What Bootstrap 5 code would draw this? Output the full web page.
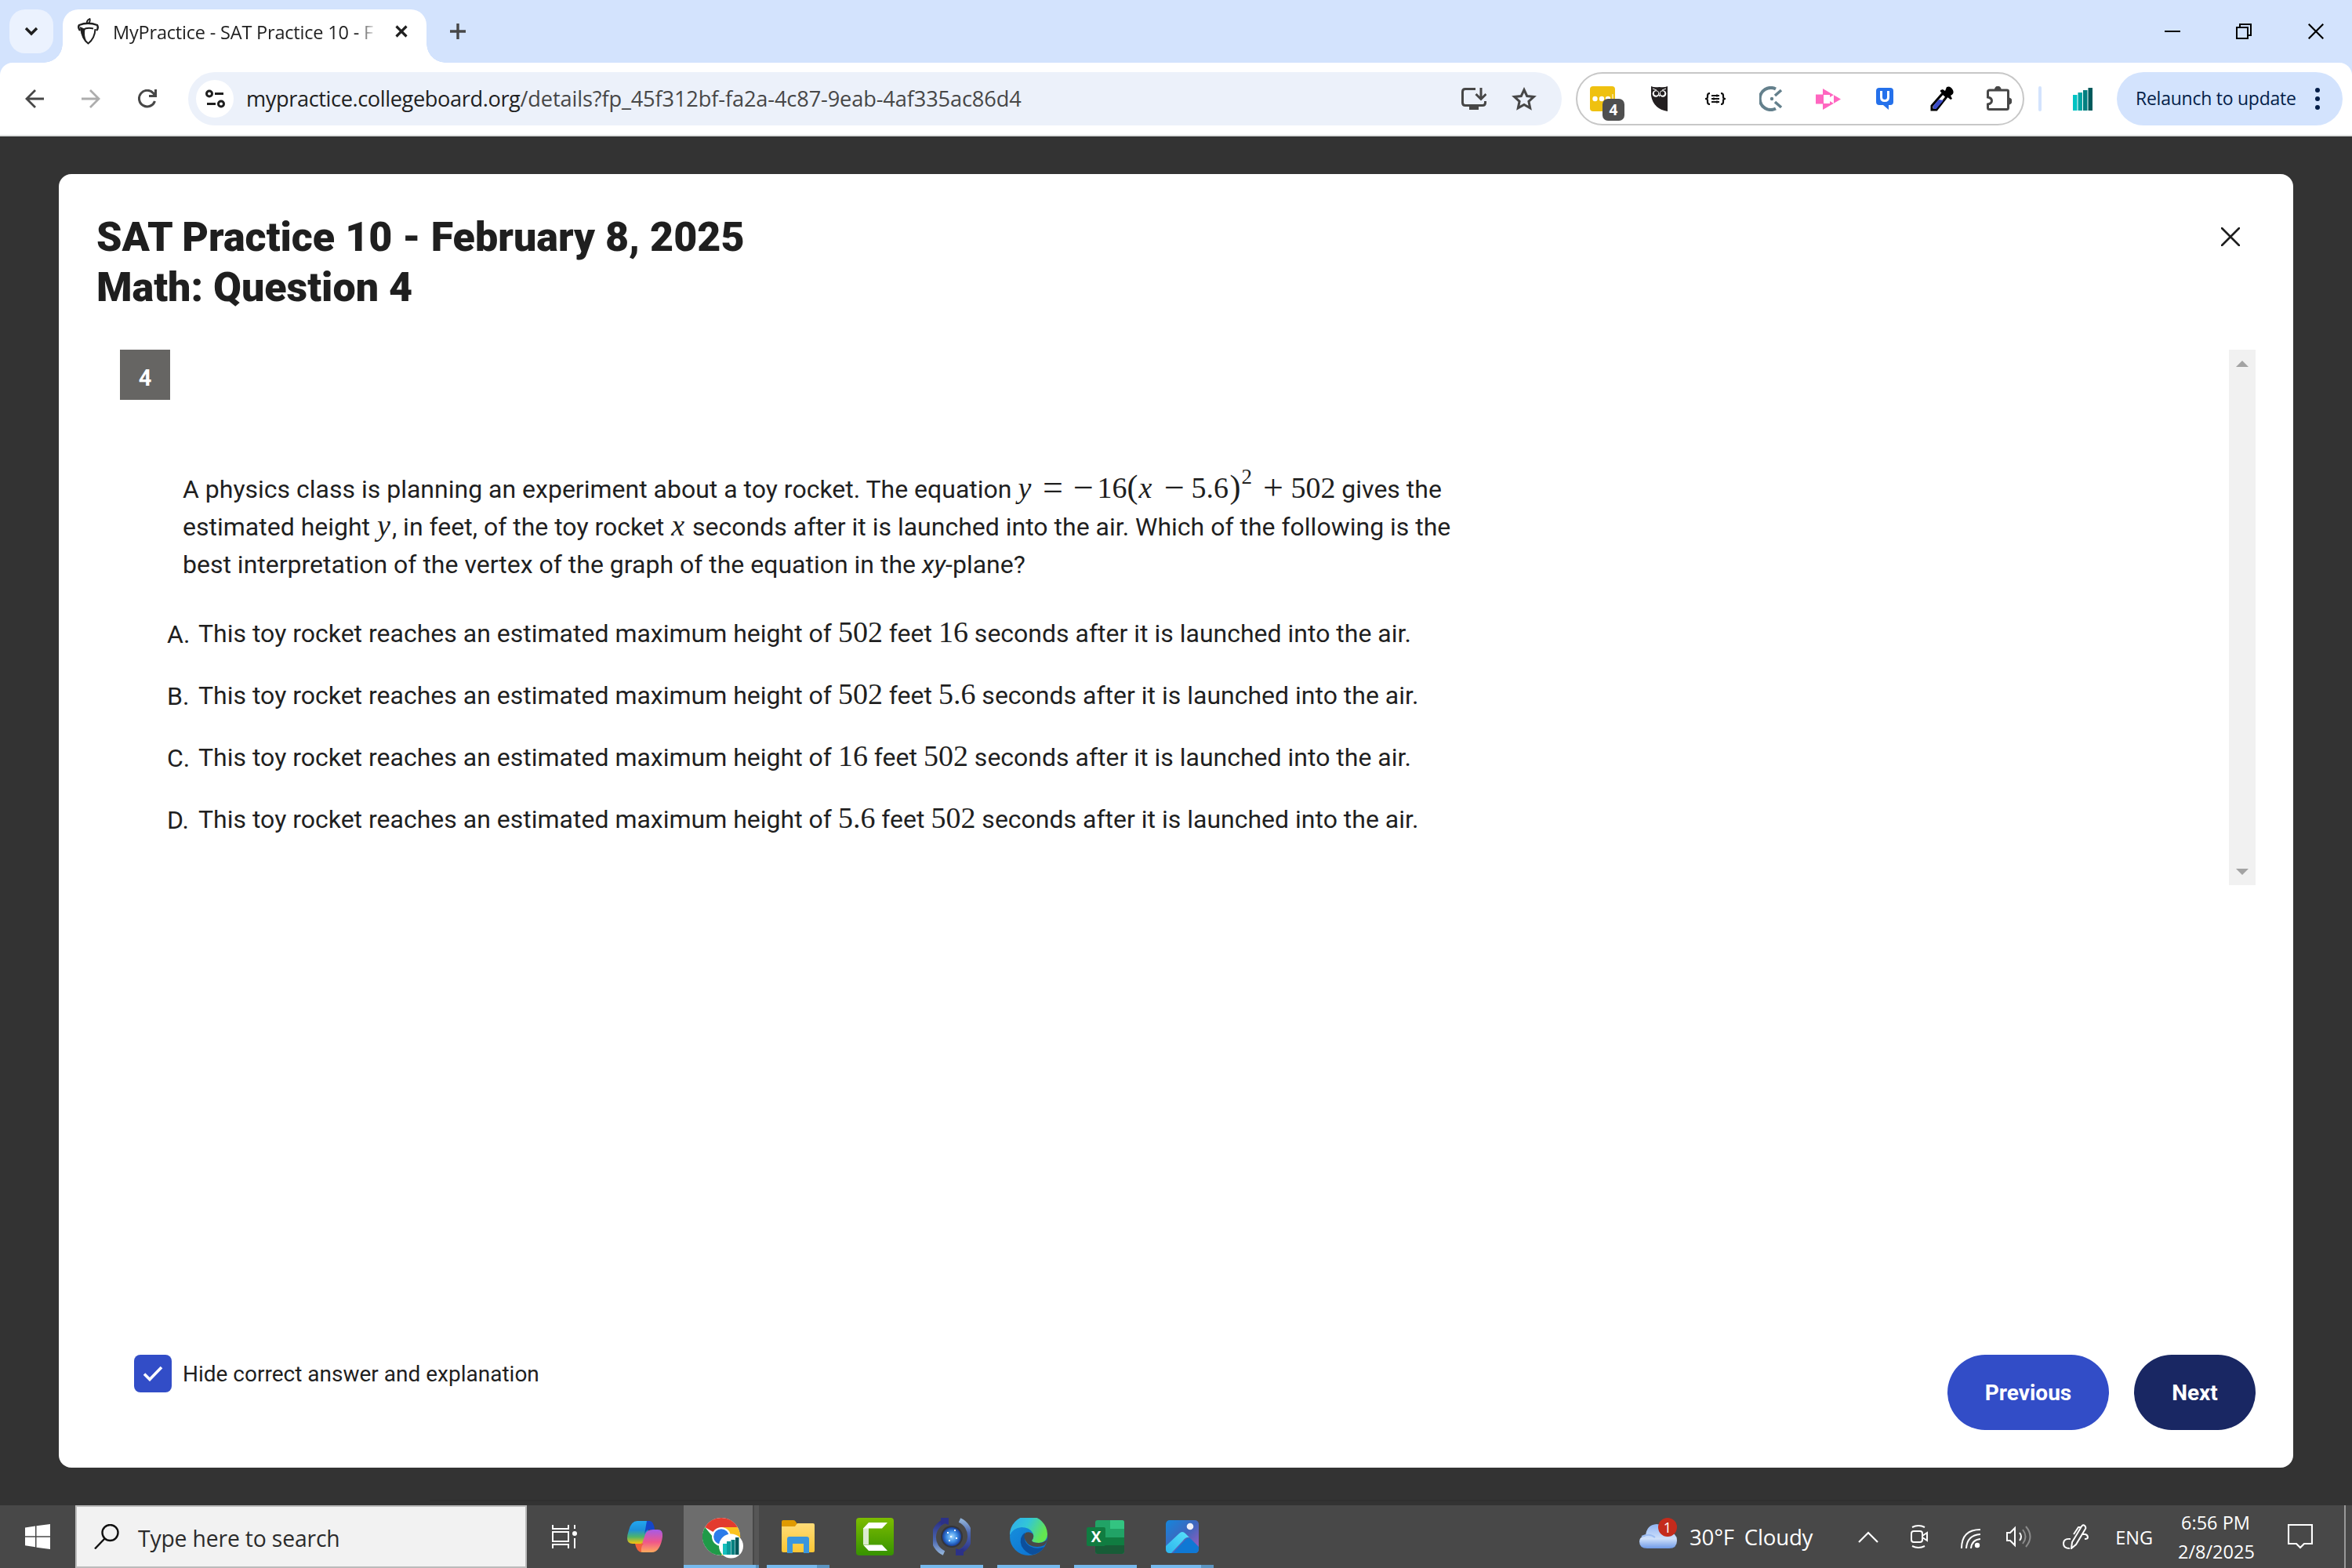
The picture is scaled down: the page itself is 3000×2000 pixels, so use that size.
<!DOCTYPE html>
<html lang="en">
<head>
<meta charset="utf-8">
<title>MyPractice - SAT Practice 10</title>
<link href="https://cdn.jsdelivr.net/npm/bootstrap@5.3.0/dist/css/bootstrap.min.css" rel="stylesheet">
<script src="https://cdn.jsdelivr.net/npm/bootstrap@5.3.0/dist/js/bootstrap.bundle.min.js"></script>
<style>
  body { width: 3000px; height: 2000px; overflow: hidden; background: #333; font-family: "Open Sans", "Noto Sans", sans-serif; color: #1f1f1f; }
  svg { display: block; flex: none; }
  .t { white-space: nowrap; display: block; flex: none; }
  /* tab strip */
  .tabstrip { height: 80px; background: #d3e3fd; padding-left: 12px; }
  .tab-search { width: 56px; height: 56px; border-radius: 20px; background: #ebf2fe; margin-top: 12px; }
  .tab-active { width: 464px; height: 68px; margin: 12px 0 0 12px; background: #fff; border-radius: 20px 20px 0 0; padding: 0 24px 0 19px; }
  .tab-active::before, .tab-active::after { content: ""; position: absolute; bottom: 0; width: 24px; height: 24px; }
  .tab-active::before { left: -24px; background: radial-gradient(circle at 0 0, transparent 23.5px, #fff 24px); }
  .tab-active::after { right: -24px; background: radial-gradient(circle at 100% 0, transparent 23.5px, #fff 24px); }
  .tab-title { width: 340px; margin: -10px 0 0 18px; font-size: 23.5px; line-height: 34px; letter-spacing: -.19px; -webkit-mask-image: linear-gradient(90deg, #000 312px, transparent 336px); mask-image: linear-gradient(90deg, #000 312px, transparent 336px); }
  .lift { margin-bottom: 12px; }
  /* toolbar */
  .toolbar-wrap { background: #d3e3fd; }
  .toolbar { height: 94px; background: #fff; border-bottom: 2px solid #dfe1e0; border-radius: 16px 16px 0 0; padding: 0 12px 0 32px; }
  .omnibox { width: 1752px; height: 68px; border-radius: 34px; background: #ecf1fa; margin-left: 40px; padding: 0 32px 0 10px; }
  .site-info { width: 48px; height: 48px; }
  .url { font-size: 27.2px; line-height: 40px; margin: 0 0 0 16px; color: #474747; letter-spacing: -.13px; }
  .url b { font-weight: 400; color: #1f1f1f; letter-spacing: -.4px; }
  .ext-pill { width: 572px; height: 68px; border: 2px solid #c7c7c7; border-radius: 34px; margin-left: 18px; padding: 0 14px 0 16px; }
  .ext-badge { right: -12px; bottom: -12px; width: 28px; height: 28px; border-radius: 7px; background: #4f4f4f; color: #fff; font: 700 19px/28px "Open Sans", sans-serif; text-align: center; }
  .tb-divider { width: 4px; height: 32px; border-radius: 2px; background: #d3e3fd; margin: 0 40px 0 18px; }
  .relaunch { width: 288px; height: 68px; border-radius: 34px; background: #d3e3fd; color: #041e49; margin-left: 31px; padding: 0 29px 0 24px; font-size: 23px; line-height: 34px; letter-spacing: -.25px; }
  /* page */
  .stage { height: 1746px; padding: 48px 75px; }
  .dialog-card { width: 2850px; height: 1650px; background: #fff; border-radius: 16px; padding: 48px; font-family: Roboto, sans-serif; }
  .dialog-title { font: 900 52px/64px Roboto, sans-serif; margin: 1px 0 -1px; }
  .closer { margin: 20px 20px 0 0; }
  .q-area { height: 683px; margin-top: 48px; }
  .q-badge { width: 64px; height: 64px; background: #666563; color: #fff; font: 700 29px/72px Roboto, sans-serif; margin-left: 30px; text-align: center; }
  .q-text { margin: 90px 0 0 110px; font-size: 32px; line-height: 48px; }
  .q-opts { margin: 40px 0 0 90px; font-size: 32px; line-height: 48px; gap: 31px; }
  .q-opts .ltr { width: 40px; padding-top: 1px; margin-bottom: -1px; }
  .m { font-family: "Liberation Serif", "Times New Roman", serif; font-size: 38px; line-height: 1px; display: inline-block; white-space: nowrap; }
  .mi { font-style: italic; margin: 0 2px 0 1px; }
  .eq span, .eq i { display: inline-block; line-height: 1px; }
  .eq .op { font-size: 46px; text-align: center; position: relative; top: 2px; }
  .eq .par { font-size: 42px; width: 15px; }
  .eq sup { font-size: 27px; top: -18px; display: inline-block; width: 19px; line-height: 1px; }
  .scroll-track { width: 34px; height: 683px; background: #f1f1f1; padding: 14px 0 13px; }
  .hide-box { width: 48px; height: 48px; border-radius: 8px; background: #324dc7; margin-left: 48px; }
  .hide-label { font-size: 28px; line-height: 50px; margin-left: 14px; }
  .pill-btn { height: 96px; border-radius: 48px; border: 0; color: #fff; font: 700 28px/98px Roboto, sans-serif; padding: 0; }
  .pill-prev { width: 206px; background: #324dc7; }
  .pill-next { width: 155px; background: #192763; margin-left: 32px; }
  .seam { position: absolute; left: 548px; top: 1913px; width: 1904px; height: 2px; background: #2f2f2f; }
  /* taskbar */
  .taskbar { height: 80px; background: #484848; color: #fff; padding-left: 32px; }
  .search-box { width: 576px; height: 80px; border: 2px solid #bbb; background: #f2f2f2; color: #2b2b2b; margin-left: 32px; padding-left: 22px; font-size: 28.3px; line-height: 42px; letter-spacing: -.15px; }
  .search-box .t { margin: 3px 0 0 24px; }
  .app { height: 80px; width: 80px; border-bottom: 4px solid #76b9ed; display: flex; align-items: center; justify-content: center; flex: none; margin-right: 18px; padding-top: 4px; }
  .app-idle { border-color: transparent; }
  .app-stack { border-image: linear-gradient(90deg, #76b9ed 62px, #5a93c0 62px) 4; border-bottom-width: 4px; border-top: 0; border-left: 0; border-right: 0; }
  .app-on { width: 96px; background: linear-gradient(90deg, #6d6d6d 88px, #484848 88px, #484848 90px, #565656 90px); margin: 0 10px 0 26px; border-image: linear-gradient(90deg, #76b9ed 88px, #5a93c0 88px) 4; border-width: 0 0 4px 0; border-style: solid; justify-content: flex-start; padding-left: 24px; }
  .wx-icon { margin-left: 525px; }
  .wx-count { width: 24px; height: 24px; right: 0; top: -8px; background: #c42b1c; font-size: 18px; line-height: 24px; }
  .wx { font-size: 27.6px; line-height: 40px; letter-spacing: -.2px; }
  .tray { font-size: 23.5px; line-height: 37px; padding-top: 2px; }
  .edge-line { width: 2px; height: 80px; background: #999; margin: 0 8px 0 40px; }
</style>
</head>
<body class="m-0">
<svg width="0" height="0" class="position-absolute"><defs>
  <linearGradient id="gCam" x1="0" y1="0" x2="0" y2="1"><stop offset="0" stop-color="#7cbc00"/><stop offset="1" stop-color="#369200"/></linearGradient>
  <linearGradient id="gCp1" x1="0" y1="0" x2="0" y2="1"><stop offset="0" stop-color="#22a7f0"/><stop offset=".4" stop-color="#1e90d8"/><stop offset=".7" stop-color="#4fb46a"/><stop offset="1" stop-color="#fbc40b"/></linearGradient>
  <linearGradient id="gCp2" x1="0" y1="0" x2="0" y2="1"><stop offset="0" stop-color="#a55be8"/><stop offset=".55" stop-color="#f0568a"/><stop offset="1" stop-color="#ffab5c"/></linearGradient>
  <linearGradient id="gEd1" x1="0" y1="0" x2="1" y2=".4"><stop offset="0" stop-color="#2fa8f0"/><stop offset=".5" stop-color="#32c6d8"/><stop offset="1" stop-color="#63e650"/></linearGradient>
  <linearGradient id="gEd2" x1="0" y1="0" x2="1" y2="1"><stop offset="0" stop-color="#1793dd"/><stop offset="1" stop-color="#0b6cd0"/></linearGradient>
  <linearGradient id="gPh" x1="0" y1="0" x2="1" y2="1"><stop offset="0" stop-color="#1586dc"/><stop offset=".5" stop-color="#3f66bd"/><stop offset="1" stop-color="#a85cc0"/></linearGradient>
  <linearGradient id="gPh2" x1="1" y1="0" x2="0" y2="1"><stop offset="0" stop-color="#58e2fa"/><stop offset="1" stop-color="#2bb5ee"/></linearGradient>
  <linearGradient id="gFo" x1="0" y1="0" x2="0" y2="1"><stop offset="0" stop-color="#ffdc78"/><stop offset="1" stop-color="#fbc634"/></linearGradient>
  <radialGradient id="gOrb"><stop offset="0" stop-color="#a8dcff"/><stop offset=".55" stop-color="#3f8fe6"/><stop offset="1" stop-color="#173f9c"/></radialGradient>
  <linearGradient id="gArc1" x1="0" y1="0" x2="0" y2="1"><stop offset="0" stop-color="#2a2f86"/><stop offset=".6" stop-color="#4a66b0"/><stop offset="1" stop-color="#8fb0d8"/></linearGradient>
  <linearGradient id="gArc2" x1="0" y1="1" x2="0" y2="0"><stop offset="0" stop-color="#2a2f86"/><stop offset=".6" stop-color="#4a66b0"/><stop offset="1" stop-color="#8fb0d8"/></linearGradient>
  <linearGradient id="gCl" x1="0" y1="0" x2="0" y2="1"><stop offset="0" stop-color="#8fb4f3"/><stop offset=".6" stop-color="#cfe0fa"/><stop offset="1" stop-color="#6f9ae6"/></linearGradient>
</defs></svg>

<header>
  <div class="tabstrip d-flex align-items-start">
    <div class="tab-search d-flex align-items-center justify-content-center"><svg width="18" height="12" viewBox="0 0 18 12"><path d="M2 2l7 7 7-7" fill="none" stroke="#1f1f1f" stroke-width="3.4"/></svg></div>
    <div class="tab-active d-flex align-items-center position-relative">
      <svg class="lift" width="27" height="34" viewBox="0 0 27 34"><g fill="none" stroke="#1f1f1f"><path d="M12 7Q11 3 15.500 1Q16.500 4 14 7" stroke-width="1.800"/><path d="M3 16Q0 12 2 9Q13 4.500 25 9Q27 13 24 16" stroke-width="2.400"/><path d="M5 14Q5 26 13.500 32.500Q22 26 22.500 14" stroke-width="2"/><path d="M7 15Q12 11.500 20 13.500" stroke-width="2"/></g><path d="M3 11L9.500 14Q8 22 11 29Q3 22 3 11Z" fill="#1f1f1f"/></svg>
      <div class="t tab-title">MyPractice - SAT Practice 10 - F</div>
      <svg class="ms-auto lift" width="16" height="16" viewBox="0 0 16 16"><path d="M1.500 1.500l13 13M14.500 1.500l-13 13" stroke="#1f1f1f" stroke-width="3.200"/></svg>
    </div>
    <svg width="20" height="20" viewBox="0 0 20 20" style="margin:30px 0 0 30px"><path d="M10 0v20M0 10h20" stroke="#474747" stroke-width="3.400"/></svg>
    <svg width="20" height="20" viewBox="0 0 20 20" style="margin:30px 0 0 auto"><path d="M0 10h20" stroke="#000" stroke-width="2"/></svg>
    <svg width="20" height="20" viewBox="0 0 20 20" style="margin:30px 0 0 71px"><path d="M1 5h14v14H1zM5 5V1h14v14h-4" fill="none" stroke="#000" stroke-width="2"/></svg>
    <svg width="20" height="20" viewBox="0 0 20 20" style="margin:30px 36px 0 72px"><path d="M.7.7l18.600 18.600M19.300.7L.7 19.300" stroke="#000" stroke-width="2.200"/></svg>
  </div>
  <div class="toolbar-wrap">
    <div class="toolbar d-flex align-items-center">
      <svg width="24" height="24" viewBox="0 0 24 24"><path d="M24 12H2M13 1L2 12l11 11" fill="none" stroke="#474747" stroke-width="2.800"/></svg>
      <svg class="ms-5" width="24" height="24" viewBox="0 0 24 24"><path d="M0 12h22M11 1l11 11-11 11" fill="none" stroke="#adadad" stroke-width="2.800"/></svg>
      <svg class="ms-5" width="24" height="24" viewBox="0 0 24 24"><path d="M21.500 15A10.300 10.300 0 1 1 19.500 4.800L22 8" fill="none" stroke="#474747" stroke-width="3"/><path d="M22.500 0v8.500H14" fill="none" stroke="#474747" stroke-width="3"/></svg>
      <div class="omnibox d-flex align-items-center">
        <div class="site-info bg-white rounded-circle d-flex align-items-center justify-content-center flex-shrink-0"><svg width="25" height="24" viewBox="0 0 25 24"><g fill="none" stroke="#1f1f1f" stroke-width="3"><circle cx="5" cy="5.500" r="3.500"/><path d="M12 5.500h11M2 18.500h11"/><circle cx="20" cy="18.500" r="3.500"/></g></svg></div>
        <div class="t url"><b>mypractice.collegeboard.org</b>/details?fp_45f312bf-fa2a-4c87-9eab-4af335ac86d4</div>
        <svg class="ms-auto" width="32" height="28" viewBox="0 0 32 28"><path d="M18 1.500H5q-3.500 0-3.500 3.500v14q0 3.500 3.500 3.500h22q3.500 0 3.500-3.500v-2M25 0v13M18.500 8l6.500 6.500L31.500 8" fill="none" stroke="#474747" stroke-width="3"/><path d="M10 23h12v5H10z" fill="#474747"/></svg>
        <svg width="32" height="30" viewBox="0 0 32 30" style="margin-left:32px"><path d="M16 3.500l3.700 8 8.700.9-6.500 5.900 1.800 8.600L16 22.500l-7.700 4.400 1.800-8.600-6.500-5.900 8.700-.9z" fill="none" stroke="#474747" stroke-width="3"/></svg>
      </div>
      <div class="ext-pill d-flex align-items-center">
        <div class="position-relative"><svg width="32" height="32" viewBox="0 0 32 32"><rect width="32" height="32" rx="4" fill="#efc110"/><circle cx="6.500" cy="16" r="3.200" fill="#fff"/><circle cx="15" cy="16" r="3.200" fill="#fff"/><circle cx="23" cy="16" r="3.200" fill="#fff"/><path d="M29 10v10" stroke="#fff"/></svg><span class="ext-badge position-absolute">4</span></div>
        <svg width="21" height="32" viewBox="0 0 21 32" style="margin-left:46px"><path d="M0 0q4 2 10.500 1Q17 2 21 0v32Q3 29 0 12z" fill="#231f20"/><circle cx="6" cy="9.500" r="4.300" fill="#fff"/><circle cx="15" cy="9.500" r="4.300" fill="#fff"/><circle cx="6.500" cy="9" r="2.700" fill="#231f20"/><circle cx="14.500" cy="9" r="2.700" fill="#231f20"/><path d="M2 3l5 2M19 3l-5 2" stroke="#fff"/><path d="M9.500 11h2l-1 3z" fill="#fff"/></svg>
        <svg class="ms-5" width="26" height="16" viewBox="0 0 26 16"><path d="M6 1Q3 1 3 4v2Q3 8 0 8q3 0 3 2v2q0 3 3 3M20 1q3 0 3 3v2q0 2 3 2-3 0-3 2v2q0 3-3 3" fill="none" stroke="#111" stroke-width="2.200"/><path d="M8 4h10M8 8h10M8 12h10" stroke="#111" stroke-width="1.800"/><path d="M15 2.500v3M11 6.500v3M15 10.500v3" stroke="#111" stroke-width="1.800"/></svg>
        <svg width="30" height="32" viewBox="0 0 30 32" style="margin-left:43px"><path d="M21 3.500A14 14 0 1 0 21 28.500" fill="none" stroke="#64808c" stroke-width="4"/><circle cx="16" cy="16" r="2.200" fill="#64808c"/><path d="M20 12l8-7M20 20l8 7" stroke="#64808c" stroke-width="3.600"/></svg>
        <svg width="32" height="31" viewBox="0 -2 32 31" style="margin-left:42px"><rect y="7.500" width="13" height="12" fill="#ff66c0"/><path d="M9 0l23 13.500L9 27z" fill="#ff66c0"/><path d="M10 8h8v3l5-3v11l-5-3v3h-8z" fill="#fff"/></svg>
        <svg width="22" height="28" viewBox="0 0 22 28" style="margin-left:45px"><path d="M4 0h14q4 0 4 4v14q0 4-4 4h-2v6l-7-6H4q-4 0-4-4V4q0-4 4-4z" fill="#2571eb"/><path d="M6.500 4v8q0 4.500 4.500 4.500t4.500-4.500V4" fill="none" stroke="#fff" stroke-width="3"/></svg>
        <svg width="30" height="32" viewBox="0 0 30 32" style="margin-left:47px"><path d="M2 25L16 9l5 4.500L8 30H2z" fill="#fff" stroke="#000" stroke-width="3"/><path d="M4 25l7-8 6 1-9.500 11H4z" fill="#3b4cc8"/><path d="M13 5l3-1 3 2 2-5q5-2 8 4 2 5-3 7l2 4-2 1L13 7z" fill="#000"/></svg>
        <svg width="32" height="32" viewBox="0 1 32 32" style="margin-left:42px"><path d="M4 6h22q1.500 0 1.500 1.500v21q0 2-2 2H3.500q-2 0-2-2V24q5-1 5-4.500T1.500 15V8q0-2 2.500-2z" fill="none" stroke="#474747" stroke-width="3"/><path d="M10 5a4.300 4.300 0 0 1 8.600 0zM28 15.500a4.300 4.300 0 0 1 0 9z" fill="#474747"/></svg>
      </div>
      <div class="tb-divider flex-shrink-0"></div>
      <svg width="25" height="29" viewBox="0 0 25 29"><path d="M0 9h5.500v20H0z" fill="#00c4c4"/><path d="M6.500 6H12v23H6.500z" fill="#00a3a3"/><path d="M13 3h5.500v26H13z" fill="#007f80"/><path d="M19.500 0H25v29h-5.500z" fill="#005a5c"/></svg>
      <div class="relaunch d-flex align-items-center justify-content-between"><span class="t" style="margin-top:-2px">Relaunch to update</span><svg width="6" height="28" viewBox="0 0 6 28"><g fill="#041e49"><circle cx="3" cy="3" r="3"/><circle cx="3" cy="14" r="3"/><circle cx="3" cy="25" r="3"/></g></svg></div>
    </div>
  </div>
</header>

<main class="stage">
  <div class="dialog-card d-flex flex-column">
    <div class="d-flex justify-content-between align-items-start">
      <h1 class="dialog-title">SAT Practice 10 - February 8, 2025<br>Math: Question 4</h1>
      <svg class="closer" width="24" height="24" viewBox="0 0 24 24"><path d="M1 1l22 22M23 1L1 23" stroke="#1e1e1e" stroke-width="2.600" stroke-linecap="round"/></svg>
    </div>
    <div class="q-area d-flex justify-content-between">
      <div>
        <div class="q-badge">4</div>
        <div class="q-text">
          <div class="t">A physics class is planning an experiment about a toy rocket. The equation <span class="m eq"><i style="width:27px">y</i><span class="op" style="width:35px">=</span><span class="op" style="width:39px;padding-left:4px">&minus;</span><span style="width:38px">16</span><span class="par">(</span><i style="width:24px">x</i><span class="op" style="width:43px">&minus;</span><span style="width:49px">5.6</span><span class="par">)</span><sup>2</sup><span class="op" style="width:44px;padding-right:1px">+</span><span>502</span></span> gives the</div>
          <div class="t">estimated height <span class="m mi">y</span>, in feet, of the toy rocket <span class="m mi">x</span> seconds after it is launched into the air. Which of the following is the</div>
          <div class="t">best interpretation of the vertex of the graph of the equation in the <i>xy</i>-plane?</div>
        </div>
        <div class="q-opts d-flex flex-column">
          <div class="d-flex"><span class="ltr">A.</span><span class="t">This toy rocket reaches an estimated maximum height of <span class="m">502</span> feet <span class="m">16</span> seconds after it is launched into the air.</span></div>
          <div class="d-flex"><span class="ltr">B.</span><span class="t">This toy rocket reaches an estimated maximum height of <span class="m">502</span> feet <span class="m">5.6</span> seconds after it is launched into the air.</span></div>
          <div class="d-flex"><span class="ltr">C.</span><span class="t">This toy rocket reaches an estimated maximum height of <span class="m">16</span> feet <span class="m">502</span> seconds after it is launched into the air.</span></div>
          <div class="d-flex"><span class="ltr">D.</span><span class="t">This toy rocket reaches an estimated maximum height of <span class="m">5.6</span> feet <span class="m">502</span> seconds after it is launched into the air.</span></div>
        </div>
      </div>
      <div class="scroll-track d-flex flex-column justify-content-between align-items-center"><svg width="16" height="8" viewBox="0 0 16 8"><path d="M0 8l8-8 8 8z" fill="#a3a3a3"/></svg><svg width="16" height="8" viewBox="0 0 16 8"><path d="M0 0l8 8 8-8z" fill="#a3a3a3"/></svg></div>
    </div>
    <div class="d-flex align-items-start mt-auto">
      <div class="hide-box d-flex align-items-center justify-content-center"><svg width="26" height="20" viewBox="0 0 26 20"><path d="M2 10.500l7 7L24 2" fill="none" stroke="#fff" stroke-width="3.600"/></svg></div>
      <span class="t hide-label">Hide correct answer and explanation</span>
      <button class="btn pill-btn pill-prev ms-auto">Previous</button>
      <button class="btn pill-btn pill-next">Next</button>
    </div>
  </div>
  <div class="seam"></div>
</main>

<footer class="taskbar d-flex align-items-center">
  <svg width="32" height="32" viewBox="0 0 32 32"><path d="M0 4.600l13-2v12.600H0zM14.500 2.300L32 0v15.200H14.500zM0 16.700h13v12.600l-13-2zM14.500 16.700H32V32l-17.500-2.300z" fill="#fff"/></svg>
  <div class="search-box d-flex align-items-center">
    <svg width="32" height="32" viewBox="0 0 32 32"><circle cx="20.500" cy="11" r="10" fill="none" stroke="#111" stroke-width="2.400"/><path d="M13.500 18.500L1 31.500" stroke="#111" stroke-width="2.400"/></svg>
    <span class="t">Type here to search</span>
  </div>
  <svg width="32" height="30" viewBox="0 0 32 30" style="margin-left:32px"><g fill="none" stroke="#fff" stroke-width="2"><path d="M1 0v5h20V0M1 9h20v12H1zM1 30v-5h20v5M29 0v5M29 17v13"/></g><circle cx="29" cy="11" r="3" fill="#fff"/></svg>
  <svg width="46" height="40" viewBox="0 0 46 40" style="margin-left:64px"><path d="M13 0h13q4 0 3 5l-6 19q-2 5-6 5H7q-7 0-7-7 0-4 2-10Q5 0 13 0z" fill="url(#gCp1)"/><path d="M25 0h4q5 1 6 11h-7q-4 0-6 6z" fill="#1546c8"/><path d="M33 11h6q7 0 6 9-1 9-5 15-3 5-9 5H20q-5 0-3-5l6-18q2-6 10-6z" fill="url(#gCp2)"/><path d="M10 29h11q-4 3-3 11-6-1-8-11z" fill="#f0623a"/></svg>
  <div class="app app-on"><svg width="54" height="54" viewBox="0 0 54 54" style="margin-top:4px"><circle cx="24" cy="25" r="24" fill="#fff"/><path d="M24 25L3.200 13A24 24 0 0 1 44.800 13z" fill="#e33b2e"/><path d="M24 25h-11L3.200 13A24 24 0 0 0 24 49L34.400 31z" fill="#1f9a48"/><path d="M24 13h20.800A24 24 0 0 1 24 49l10.400-18z" fill="#fcc31e"/><circle cx="24" cy="25" r="12" fill="#fff"/><circle cx="24" cy="25" r="9.800" fill="#2c7be9"/><circle cx="36.500" cy="37" r="15.500" fill="#fff"/><path d="M26 34h5v14h-5z" fill="#16c0bd"/><path d="M31 31h5v17h-5z" fill="#0a9d9c"/><path d="M36.500 29h5v19h-5z" fill="#078180"/><path d="M42 26h4.500v22H42z" fill="#055a5c"/></svg></div>
  <div class="app app-stack"><svg width="42" height="42" viewBox="0 0 42 42"><path d="M0 2q0-2 2-2h13q2 0 3 2l2 3v5H0z" fill="#e09a00"/><path d="M0 8h17l3-4h20q2 0 2 2v33q0 2-2 2H2q-2 0-2-2z" fill="url(#gFo)"/><path d="M7 42V24q0-3 3-3h22q3 0 3 3v18h-7V30H14v12z" fill="#3a96dd"/></svg></div>
  <div class="app app-idle"><svg width="48" height="48" viewBox="0 0 48 48"><rect width="48" height="48" rx="4" fill="url(#gCam)"/><path d="M9 13h7v21h-7z" fill="#dcebd0"/><path d="M16 6h24l-7 7.500H9z M9 34.500h24L40 42H16z" fill="#fff"/></svg></div>
  <div class="app"><svg width="48" height="48" viewBox="0 0 48 48"><path d="M16 4A22 22 0 0 0 14 45" fill="none" stroke="url(#gArc1)" stroke-width="6"/><path d="M32 44A22 22 0 0 0 34 3" fill="none" stroke="url(#gArc2)" stroke-width="6"/><path d="M10 0h10v9l-5-2-5 2zM29 48h10v-9l-5 2-5-2z" fill="#2c3188"/><circle cx="24" cy="24" r="14" fill="#35353a"/><circle cx="24" cy="24" r="12" fill="url(#gOrb)"/><path d="M18 19h2M27 16h2M22 24h2M29 26h2M20 29h2" stroke="#fff" stroke-width="2"/></svg></div>
  <div class="app"><svg width="48" height="48" viewBox="0 0 48 48"><circle cx="24" cy="24" r="24" fill="url(#gEd2)"/><path d="M0 22A24 24 0 0 1 48 21q0 10-11 11-9 0-9-3 4-5 1-10Q25 12 15 12 4 13 0 22z" fill="url(#gEd1)"/><path d="M19 19q-8 6-4 17 5 9 14 11 10-2 15-10-7 3-14 1-11-3-11-13 0-4 0-6z" fill="#0c4f9c"/><path d="M28 29q4-5 1-9-4-3-9-1-3 4 0 10 4 8 15 8 5 0 9-2 3-3 4-8-4 5-11 5-8 0-9-3z" fill="#484848"/></svg></div>
  <div class="app"><svg width="48" height="43" viewBox="0 0 48 43"><rect x="11" width="37" height="43" rx="3" fill="#21a366"/><path d="M30 0h15q3 0 3 3v8H30z" fill="#33c481"/><path d="M11 22h37v10H11z" fill="#107c41"/><path d="M11 32h37v8q0 3-3 3H14q-3 0-3-3z" fill="#185c37"/><path d="M30 11h18v11H30z" fill="#21a366"/><rect y="9" width="24" height="24" rx="2" fill="#107c41"/><text x="12" y="28" font-family="Open Sans" font-weight="700" font-size="19" fill="#fff" text-anchor="middle">X</text></svg></div>
  <div class="app app-stack"><svg width="42" height="42" viewBox="0 0 42 42"><rect width="42" height="42" rx="5" fill="url(#gPh)"/><path d="M9 42l17-18q3-3 6 0l10 10v3q0 5-5 5z" fill="#0f78d4"/><path d="M0 33l17-16q4-4 8 0l5 5q-4-1-8 4L7 42H5q-5 0-5-5z" fill="url(#gPh2)"/><circle cx="31" cy="8" r="4.300" fill="#eef0f8"/></svg></div>
  <div class="wx-icon position-relative"><svg width="48" height="32" viewBox="0 0 48 32"><path d="M8 15Q9 1 22 0q11 0 15 10 11 1 11 11 0 10-10 10H10Q0 31 0 22q0-6 8-7z" fill="url(#gCl)"/><path d="M3 16q10-5 17 1" fill="none" stroke="#9dbdf2" stroke-width="2"/></svg><span class="wx-count position-absolute rounded-circle text-center">1</span></div>
  <span class="t wx" style="margin-left:16px">30°F</span>
  <span class="t wx" style="margin-left:13px">Cloudy</span>
  <svg width="26" height="15" viewBox="0 0 26 15" class="ms-auto"><path d="M1 14L13 2l12 12" fill="none" stroke="#fff" stroke-width="2.200"/></svg>
  <svg width="22" height="30" viewBox="0 0 22 30" style="margin-left:41px"><g fill="none" stroke="#fff" stroke-width="2"><rect x="1" y="8" width="14" height="14" rx="3"/><path d="M15 14l6-4v10l-6-4M2 3q8-4 16 0M2 27q8 4 16 0"/></g></svg>
  <svg width="25" height="25" viewBox="0 0 25 25" style="margin:4px 0 0 42px"><g fill="none" stroke="#fff" stroke-width="2"><path d="M1 25Q1 1 25 1M7 25Q8 8 25 7M13 25q1-11 12-12"/></g><circle cx="21" cy="21" r="3.200" fill="#fff"/></svg>
  <svg width="32" height="28" viewBox="0 0 32 28" style="margin-left:33px"><path d="M1 9h4l6-6v22l-6-6H1z" fill="none" stroke="#fff" stroke-width="2"/><path d="M17 9q4 5 0 10" fill="none" stroke="#fff" stroke-width="2"/><path d="M21 5q7 9 0 18M25 1q11 13 0 26" fill="none" stroke="#8c8c8c" stroke-width="2"/></svg>
  <svg width="33" height="32" viewBox="0 0 33 32" style="margin-left:40px"><g fill="none" stroke="#fff" stroke-width="2"><path d="M11 31l1-8L24 3q2-3 4-1t1 4L17 26l-6 5zM14 13l6-9h4M10 19q-9-1-9 6 0 6 8 6M24 13h5q3 1 3 4 0 2-4 2"/></g></svg>
  <span class="t tray" style="margin-left:34px">ENG</span>
  <div class="tray text-center" style="margin-left:32px;width:96px"><span class="t">6:56 PM</span><span class="t">2/8/2025</span></div>
  <svg width="32" height="32" viewBox="0 0 32 32" style="margin-left:44px"><path d="M1 1h30v24H21l-5 5-5-5H1z" fill="none" stroke="#fff" stroke-width="2.200"/></svg>
  <div class="edge-line"></div>
</footer>
</body>
</html>
